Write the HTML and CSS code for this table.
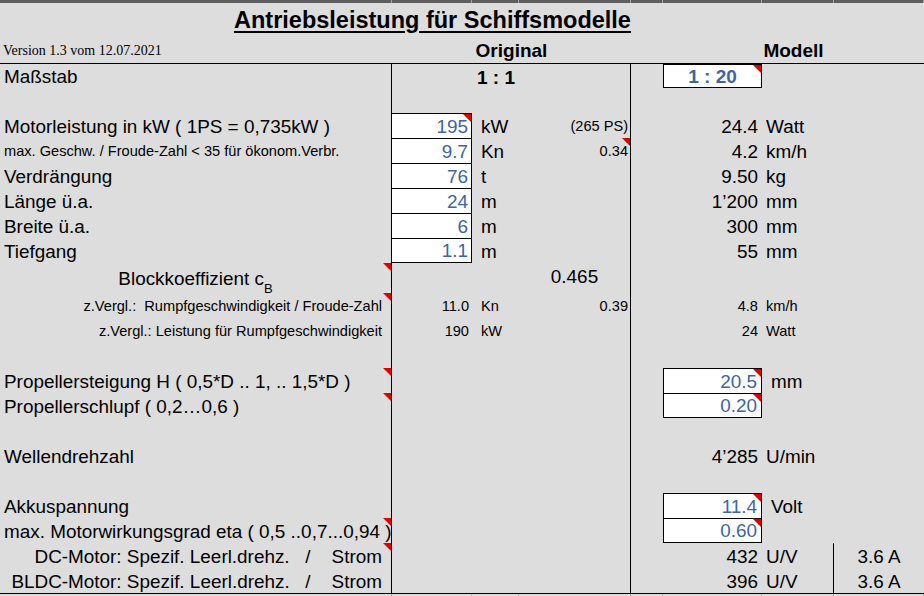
FILE: index.html
```html
<!DOCTYPE html>
<html lang="de">
<head>
<meta charset="utf-8">
<title>Antriebsleistung für Schiffsmodelle</title>
<link rel="stylesheet" href="styles.css">
</head>
<body>
<div class="sheet">
  <div class="grid bar"><div></div><div></div><div></div><div></div><div></div><div></div><div></div><div></div></div>
  <div class="title-row"><h1 class="title">Antriebsleistung für Schiffsmodelle</h1></div>
  <div class="grid head">
    <div class="c version">Version 1.3 vom 12.07.2021</div>
    <div class="c bold ctr span-bd">Original</div>
    <div class="c"></div>
    <div class="c bold ctr span-fh">Modell</div>
  </div>

  <div class="table">
    <div class="row first">
      <div class="c a">Maßstab</div>
      <div class="c bold span-bd d scale">1 : 1</div>
      <div class="c"></div>
      <div class="c f in box full bold ctr note">1 : 20</div>
      <div class="c"></div><div class="c"></div>
    </div>
    <div class="row">
      <div class="c a"></div><div class="c span-bd d"></div><div class="c span-eh"></div>
    </div>
    <div class="row">
      <div class="c a">Motorleistung in kW ( 1PS = 0,735kW )</div>
      <div class="c b in note">195</div>
      <div class="c u">kW</div>
      <div class="c d sm">(265 PS)</div>
      <div class="c"></div>
      <div class="c f">24.4</div>
      <div class="c g">Watt</div>
      <div class="c"></div>
    </div>
    <div class="row">
      <div class="c a sm">max. Geschw. / Froude-Zahl &lt; 35 für ökonom.Verbr.</div>
      <div class="c b in">9.7</div>
      <div class="c u">Kn</div>
      <div class="c d sm note">0.34</div>
      <div class="c"></div>
      <div class="c f">4.2</div>
      <div class="c g">km/h</div>
      <div class="c"></div>
    </div>
    <div class="row">
      <div class="c a">Verdrängung</div>
      <div class="c b in">76</div>
      <div class="c u">t</div>
      <div class="c d"></div>
      <div class="c"></div>
      <div class="c f">9.50</div>
      <div class="c g">kg</div>
      <div class="c"></div>
    </div>
    <div class="row">
      <div class="c a">Länge ü.a.</div>
      <div class="c b in">24</div>
      <div class="c u">m</div>
      <div class="c d"></div>
      <div class="c"></div>
      <div class="c f">1’200</div>
      <div class="c g">mm</div>
      <div class="c"></div>
    </div>
    <div class="row">
      <div class="c a">Breite ü.a.</div>
      <div class="c b in">6</div>
      <div class="c u">m</div>
      <div class="c d"></div>
      <div class="c"></div>
      <div class="c f">300</div>
      <div class="c g">mm</div>
      <div class="c"></div>
    </div>
    <div class="row">
      <div class="c a">Tiefgang</div>
      <div class="c b in last">1.1</div>
      <div class="c u">m</div>
      <div class="c d"></div>
      <div class="c"></div>
      <div class="c f">55</div>
      <div class="c g">mm</div>
      <div class="c"></div>
    </div>
    <div class="row tall">
      <div class="c a ctr note block">Blockkoeffizient c<sub>B</sub></div>
      <div class="c"></div>
      <div class="c"></div>
      <div class="c d ctr block-val">0.465</div>
      <div class="c span-eh"></div>
    </div>
    <div class="row">
      <div class="c a r sm note">z.Vergl.:  Rumpfgeschwindigkeit / Froude-Zahl</div>
      <div class="c b sm">11.0</div>
      <div class="c u sm">Kn</div>
      <div class="c d sm">0.39</div>
      <div class="c"></div>
      <div class="c f sm">4.8</div>
      <div class="c g sm">km/h</div>
      <div class="c"></div>
    </div>
    <div class="row">
      <div class="c a r sm">z.Vergl.: Leistung für Rumpfgeschwindigkeit</div>
      <div class="c b sm">190</div>
      <div class="c u sm">kW</div>
      <div class="c d"></div>
      <div class="c"></div>
      <div class="c f sm">24</div>
      <div class="c g sm">Watt</div>
      <div class="c"></div>
    </div>
    <div class="row">
      <div class="c a"></div><div class="c span-bd d"></div><div class="c span-eh"></div>
    </div>
    <div class="row">
      <div class="c a note">Propellersteigung H ( 0,5*D .. 1, .. 1,5*D )</div>
      <div class="c span-bd d"></div>
      <div class="c"></div>
      <div class="c f in box note">20.5</div>
      <div class="c g wide">mm</div>
      <div class="c"></div>
    </div>
    <div class="row">
      <div class="c a note">Propellerschlupf ( 0,2…0,6 )</div>
      <div class="c span-bd d"></div>
      <div class="c"></div>
      <div class="c f in box last note">0.20</div>
      <div class="c g"></div>
      <div class="c"></div>
    </div>
    <div class="row">
      <div class="c a"></div><div class="c span-bd d"></div><div class="c span-eh"></div>
    </div>
    <div class="row">
      <div class="c a">Wellendrehzahl</div>
      <div class="c span-bd d"></div>
      <div class="c"></div>
      <div class="c f">4’285</div>
      <div class="c g">U/min</div>
      <div class="c"></div>
    </div>
    <div class="row">
      <div class="c a"></div><div class="c span-bd d"></div><div class="c span-eh"></div>
    </div>
    <div class="row">
      <div class="c a">Akkuspannung</div>
      <div class="c span-bd d"></div>
      <div class="c"></div>
      <div class="c f in box note">11.4</div>
      <div class="c g wide">Volt</div>
      <div class="c"></div>
    </div>
    <div class="row">
      <div class="c a note">max. Motorwirkungsgrad eta ( 0,5 ..0,7...0,94 )</div>
      <div class="c span-bd d"></div>
      <div class="c"></div>
      <div class="c f in box last note">0.60</div>
      <div class="c g"></div>
      <div class="c"></div>
    </div>
    <div class="row">
      <div class="c a r note">DC-Motor: Spezif. Leerl.drehz.   /    Strom</div>
      <div class="c span-bd d"></div>
      <div class="c"></div>
      <div class="c f">432</div>
      <div class="c g sep">U/V</div>
      <div class="c ctr">3.6 A</div>
    </div>
    <div class="row">
      <div class="c a r">BLDC-Motor: Spezif. Leerl.drehz.   /    Strom</div>
      <div class="c span-bd d"></div>
      <div class="c"></div>
      <div class="c f">396</div>
      <div class="c g sep">U/V</div>
      <div class="c ctr">3.6 A</div>
    </div>
  </div>
  <div class="grid ticks"><div></div><div></div><div></div><div></div><div></div><div></div><div></div><div></div></div>
</div>
</body>
</html>
```

FILE: styles.css
```css
* {
  box-sizing: border-box;
  margin: 0;
  padding: 0;
}

body {
  margin: 0;
  background: #dddddd;
}

.sheet {
  width: 924px;
  height: 596px;
  overflow: hidden;
  background: #dddddd;
  color: #000;
  font-family: "Liberation Sans", Arial, sans-serif;
  font-size: 18.9px;
}

.grid,
.row {
  display: grid;
  grid-template-columns: 392px 80px 47px 112px 32px 99px 72px 90px;
}

.bar {
  height: 3px;
  background: #5e5e5e;
}

.bar > div {
  border-right: 1px solid #a2a2a2;
}

.ticks {
  height: 2px;
}

.ticks > div {
  border-right: 1px solid #b4b4b4;
}

.title-row {
  height: 35px;
  display: flex;
  align-items: center;
  padding-left: 234px;
}

.title {
  font-size: 23.5px;
  font-weight: bold;
  text-decoration: underline;
  text-decoration-thickness: 2px;
  text-underline-offset: 3px;
  line-height: 1;
}

.head {
  height: 25px;
}

.head .c {
  padding-bottom: 3px;
}

.head .version {
  font-family: "Liberation Serif", "Times New Roman", serif;
  font-size: 14px;
  padding-left: 3px;
  padding-bottom: 5px;
}

.table {
  border-top: 1px solid #000;
  border-bottom: 1px solid #000;
}

.row {
  height: 25px;
}

.row.first {
  height: 24px;
}

.row.tall {
  height: 30px;
}

.c {
  position: relative;
  display: flex;
  align-items: flex-end;
  justify-content: flex-start;
  white-space: pre;
  line-height: 1;
  padding-bottom: 1px;
}

.bold {
  font-weight: bold;
  font-size: 19px;
}

.ctr {
  justify-content: center;
}

.sm {
  font-size: 14.6px;
  padding-bottom: 4px;
}

.span-bd {
  grid-column: 2 / 5;
}

.span-fh {
  grid-column: 6 / 9;
}

.span-eh {
  grid-column: 5 / 9;
}

.a {
  border-right: 1px solid #000;
  padding-left: 4px;
}

.a.r {
  justify-content: flex-end;
  padding-right: 9px;
}

.a.ctr {
  padding-left: 0;
}

.b {
  justify-content: flex-end;
  padding-right: 3px;
}

.u {
  padding-left: 9px;
}

.d {
  border-right: 1px solid #000;
  justify-content: flex-end;
  padding-right: 2px;
}

.d.ctr {
  justify-content: center;
  padding-right: 0;
}

.d.scale {
  justify-content: flex-start;
  padding-left: 85px;
}

.f {
  justify-content: flex-end;
  padding-right: 4px;
}

.g {
  padding-left: 4px;
}

.g.wide {
  padding-left: 9px;
}

.g.sep {
  border-right: 1px solid #000;
}

.in {
  background: #fff;
  color: #3d65a5;
  border-top: 1px solid #000;
  border-right: 1px solid #000;
}

.in.box {
  border-left: 1px solid #000;
}

.in.last,
.in.full {
  border-bottom: 1px solid #000;
}

.in.full {
  justify-content: center;
  padding-right: 0;
  padding-bottom: 1px;
}

.block {
  padding-bottom: 4px;
}

.block sub {
  font-size: 13px;
  vertical-align: -3px;
  line-height: 0;
}

.block-val {
  padding-bottom: 6px;
}

.note::after {
  content: "";
  position: absolute;
  top: 0;
  right: 0;
  width: 0;
  height: 0;
  border-top: 8px solid #e00000;
  border-left: 8px solid transparent;
}
```
